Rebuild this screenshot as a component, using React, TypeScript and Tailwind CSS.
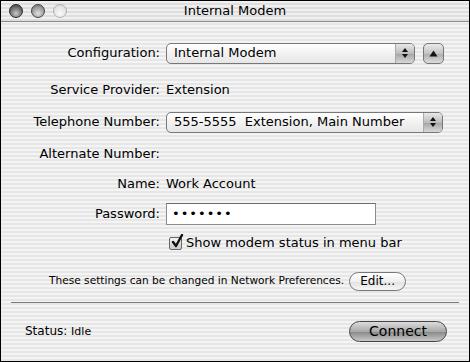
import React from 'react'

const font = { fontFamily: '"DejaVu Sans", "Liberation Sans", sans-serif' }

function Light({ tone }: { tone: 'dark' | 'mid' | 'light' }) {
  const fill =
    tone === 'dark'
      ? 'bg-[radial-gradient(circle_at_50%_70%,#c8c8c8,#6a6a6a_60%,#3a3a3a)] border-[#2a2a2a]'
      : tone === 'mid'
      ? 'bg-[radial-gradient(circle_at_50%_70%,#e0e0e0,#9a9a9a_60%,#6a6a6a)] border-[#444]'
      : 'bg-[radial-gradient(circle_at_50%_70%,#fafafa,#e4e4e4_60%,#cfcfcf)] border-[#b0b0b0]'
  return <div className={`size-[14px] rounded-full border ${fill}`} />
}

function Arrows() {
  return (
    <svg width="8" height="12" viewBox="0 0 8 12">
      <path d="M4 1 L7 5 L1 5 Z" fill="#111" />
      <path d="M4 11 L7 7 L1 7 Z" fill="#111" />
    </svg>
  )
}

function Popup({ text, width }: { text: string; width: string }) {
  return (
    <div
      className={`${width} h-[21px] flex items-stretch rounded-[5px] border border-[#777] bg-[linear-gradient(#ffffff,#f2f2f2_50%,#e6e6e6)] overflow-hidden`}
    >
      <div className="flex-1 pl-[7px] flex items-center text-[13px] text-black whitespace-pre">{text}</div>
      <div className="w-[19px] flex items-center justify-center border-l border-[#aaa] bg-[linear-gradient(#e8e8e8,#bcbcbc_50%,#a8a8a8_55%,#d8d8d8)]">
        <Arrows />
      </div>
    </div>
  )
}

function Row({ label, children, h }: { label: string; children?: React.ReactNode; h: string }) {
  return (
    <div className={`flex items-center ${h}`}>
      <div className="w-[165px] text-right pr-[6px] text-[13px] text-black">{label}</div>
      <div className="flex items-center">{children}</div>
    </div>
  )
}

export default function App() {
  return (
    <div
      style={font}
      className="w-[470px] h-[362px] border border-black bg-[repeating-linear-gradient(#f4f4f4_0px,#f4f4f4_2px,#e6e6e6_2px,#e6e6e6_4px)] flex flex-col text-black"
    >
      {/* title bar */}
      <div className="h-[21px] relative flex items-center justify-center border-b border-[#8a8a8a] bg-[repeating-linear-gradient(#f0f0f0_0px,#f0f0f0_2px,#dedede_2px,#dedede_4px)]">
        <div className="absolute left-[8px] top-[3px] flex gap-[8px]">
          <Light tone="dark" />
          <Light tone="mid" />
          <Light tone="light" />
        </div>
        <span className="text-[13px]">Internal Modem</span>
      </div>

      <div className="mt-[20px]">
        <Row label="Configuration:" h="h-[22px]">
          <Popup text="Internal Modem" width="w-[249px]" />
          <div className="ml-[8px] size-[21px] rounded-[5px] border border-[#777] bg-[linear-gradient(#eaeaea,#c4c4c4_50%,#b0b0b0_55%,#dcdcdc)] flex items-center justify-center">
            <svg width="9" height="7" viewBox="0 0 9 7">
              <path d="M4.5 0.5 L8.5 6.5 L0.5 6.5 Z" fill="#111" />
            </svg>
          </div>
        </Row>
        <div className="h-[17px]" />
        <Row label="Service Provider:" h="h-[18px]">
          <span className="text-[13px]">Extension</span>
        </Row>
        <div className="h-[12px]" />
        <Row label="Telephone Number:" h="h-[22px]">
          <Popup text="555-5555  Extension, Main Number" width="w-[277px]" />
        </Row>
        <div className="h-[12px]" />
        <Row label="Alternate Number:" h="h-[18px]" />
        <div className="h-[12px]" />
        <Row label="Name:" h="h-[18px]">
          <span className="text-[13px]">Work Account</span>
        </Row>
        <div className="h-[9px]" />
        <Row label="Password:" h="h-[24px]">
          <div className="w-[210px] h-[22px] bg-white border border-[#8c8c8c] border-t-[#6c6c6c] flex items-center pl-[5px] text-[13px] tracking-[1px]">
            •••••••
          </div>
        </Row>
        <div className="h-[8px]" />
        <div className="flex items-center h-[18px] pl-[168px]">
          <div className="size-[13px] rounded-[2px] border border-[#666] bg-[linear-gradient(#f4f4f4,#c8c8c8)] relative">
            <svg className="absolute left-[1px] top-[-4px]" width="13" height="15" viewBox="0 0 13 15">
              <path d="M2 8 L5 12 L11 1" fill="none" stroke="#111" strokeWidth="2.4" strokeLinecap="round" strokeLinejoin="round" />
            </svg>
          </div>
          <span className="ml-[4px] text-[13px]">Show modem status in menu bar</span>
        </div>
        <div className="h-[19px]" />
        <div className="flex items-center h-[20px] pl-[48px]">
          <span className="text-[10.6px]">These settings can be changed in Network Preferences.</span>
          <div className="ml-[5px] w-[57px] h-[19px] rounded-full border border-[#777] bg-[linear-gradient(#ffffff,#efefef_50%,#e2e2e2_55%,#f6f6f6)] flex items-center justify-center text-[12px]">
            Edit...
          </div>
        </div>
      </div>

      <div className="mt-[11px] mx-[10px] border-t border-[#7a7a7a]" />

      <div className="mt-[18px] flex items-center justify-between pl-[24px] pr-[22px]">
        <span className="text-[12px]">Status: <span className="text-[11px]">Idle</span></span>
        <div className="w-[98px] h-[21px] rounded-full border border-[#444] bg-[linear-gradient(#dcdcdc,#a8a8a8_50%,#8c8c8c_55%,#c8c8c8)] flex items-center justify-center text-[14px]">
          Connect
        </div>
      </div>
    </div>
  )
}
